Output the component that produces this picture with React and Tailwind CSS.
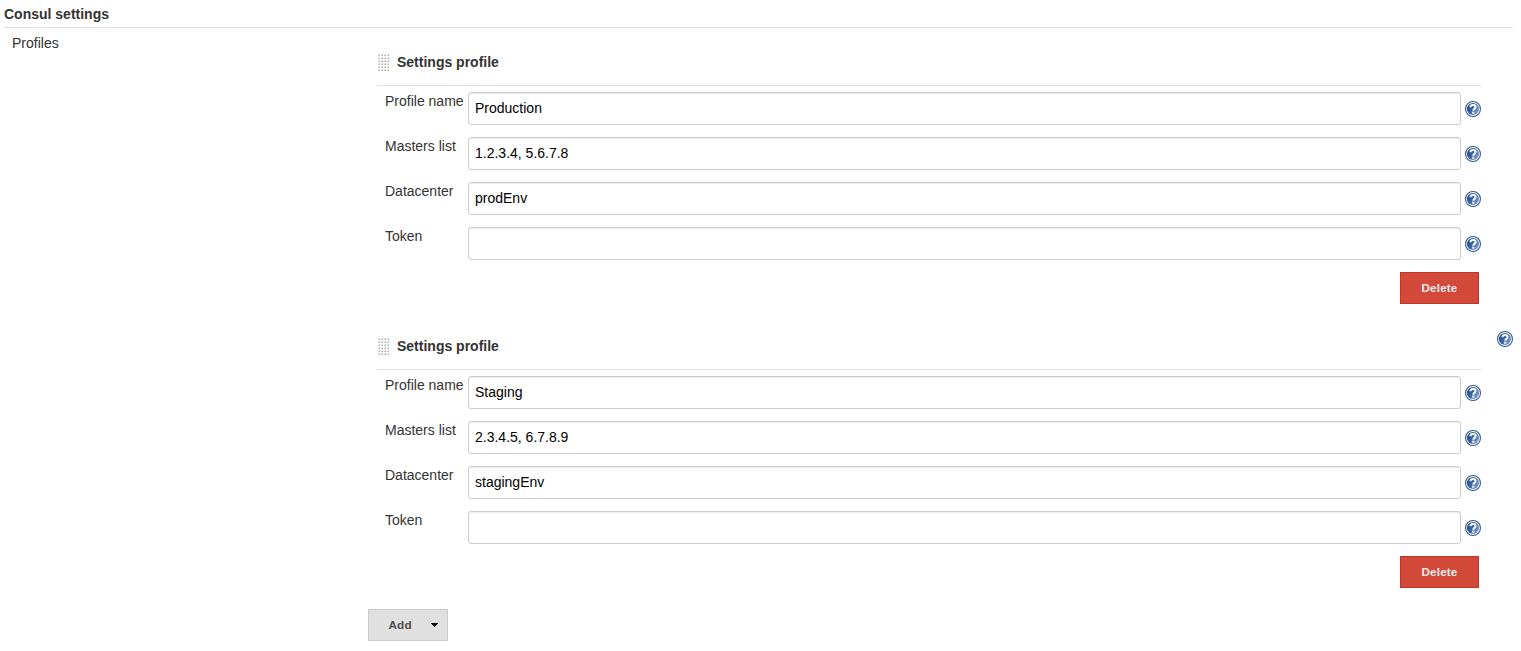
import React from "react";

const profiles = [
  { name: "Production", masters: "1.2.3.4, 5.6.7.8", datacenter: "prodEnv", token: "" },
  { name: "Staging", masters: "2.3.4.5, 6.7.8.9", datacenter: "stagingEnv", token: "" },
];

const fields = [
  ["name", "Profile name"],
  ["masters", "Masters list"],
  ["datacenter", "Datacenter"],
  ["token", "Token"],
];

function HelpIcon() {
  return (
    <svg className="block h-4 w-4 shrink-0" viewBox="0 0 16 16" role="img" aria-label="Help">
      <defs>
        <linearGradient id="helpFill" x1="0" y1="0.2" x2="1" y2="0.8">
          <stop offset="0" stopColor="#1f4886" />
          <stop offset="0.45" stopColor="#3a65a5" />
          <stop offset="1" stopColor="#8aa9d4" />
        </linearGradient>
      </defs>
      <circle cx="8" cy="8" r="7.45" fill="#fff" stroke="#2f578f" strokeWidth="1.1" />
      <circle cx="8" cy="8" r="6.1" fill="url(#helpFill)" />
      <path
        d="M5.4 6.3C5.5 4.5 6.6 3.9 8.1 3.9c1.6 0 2.5.9 2.5 2.1 0 1.7-2.3 1.8-2.3 3.7"
        fill="none"
        stroke="#fff"
        strokeWidth="2"
      />
      <rect x="7.2" y="10.7" width="2.1" height="2" fill="#fff" />
    </svg>
  );
}

function Grip() {
  const dots = [];
  for (let row = 0; row < 6; row++) {
    for (let col = 0; col < 4; col++) {
      dots.push(
        <g key={`${row}-${col}`} transform={`translate(${col * 3} ${row * 3})`}>
          <rect width="2" height="2" fill="#cececa" />
          <rect width="1" height="1" fill="#f0f0ee" />
          <rect x="1" y="1" width="1" height="1" fill="#b2b2ad" />
        </g>
      );
    }
  }
  return (
    <svg className="mt-px block h-[18px] w-3 cursor-move" viewBox="0 0 12 18" shapeRendering="crispEdges">
      {dots}
    </svg>
  );
}

function Profile({ profile }) {
  return (
    <section className="h-[284px]">
      <div className="flex h-[33px] border-b border-[#dfdfdf] pl-px">
        <Grip />
        <h2 className="ml-[7px] text-sm leading-[18px] font-bold">Settings profile</h2>
      </div>
      <div className="mt-1.5 flex flex-col gap-3">
        {fields.map(([key, label]) => (
          <div key={key} className="flex h-[33px] items-start">
            <label className="w-[91px] shrink-0 pl-2 text-sm leading-[18px] whitespace-nowrap">{label}</label>
            <input
              type="text"
              aria-label={label}
              defaultValue={profile[key]}
              className="h-[33px] min-w-0 flex-1 rounded-[3px] border border-[#ccc] bg-white px-1.5 pb-0.5 text-sm text-black shadow-[inset_0_1px_1px_rgba(0,0,0,0.075)] outline-none"
            />
            <div className="mt-[9px] ml-1">
              <HelpIcon />
            </div>
          </div>
        ))}
      </div>
      <div className="mt-3 flex justify-end pr-0.5">
        <button className="h-8 w-[79px] border border-[#bf3526] bg-[#d24939] text-[11.7px] font-bold tracking-[0.15px] text-[#eee]">
          Delete
        </button>
      </div>
    </section>
  );
}

export default function App() {
  return (
    <main className="h-[651px] w-full overflow-hidden bg-white pr-2 pl-1 font-['Liberation_Sans',Arial,sans-serif] text-[#333]">
      <h1 className="h-7 border-b border-[#dfdfdf] pt-[5px] text-sm leading-[18px] font-bold">Consul settings</h1>
      <div className="flex">
        <div className="w-[364px] shrink-0 pt-1.5 pl-2 text-sm leading-[18px]">Profiles</div>
        <div className="min-w-0 flex-1 pt-[25px]">
          <div className="pl-[9px]">
            {profiles.map((p) => (
              <Profile key={p.name} profile={p} />
            ))}
          </div>
          <button className="-mt-3 flex h-8 w-20 items-center border border-[#ccc] bg-[#e0e0e0] pl-[19.5px] text-[11.7px] font-bold tracking-[0.15px] text-[#4d4d4d]">
            <span className="w-[42.5px] text-left">Add</span>
            <svg className="h-1 w-[7px]" viewBox="0 0 7 4" shapeRendering="crispEdges">
              <path d="M0 0H7V1H6V2H5V3H4V4H3V3H2V2H1V1H0Z" fill="#000" />
            </svg>
          </button>
        </div>
        <div className="w-8 shrink-0 pt-[303px] pl-4">
          <HelpIcon />
        </div>
      </div>
    </main>
  );
}
